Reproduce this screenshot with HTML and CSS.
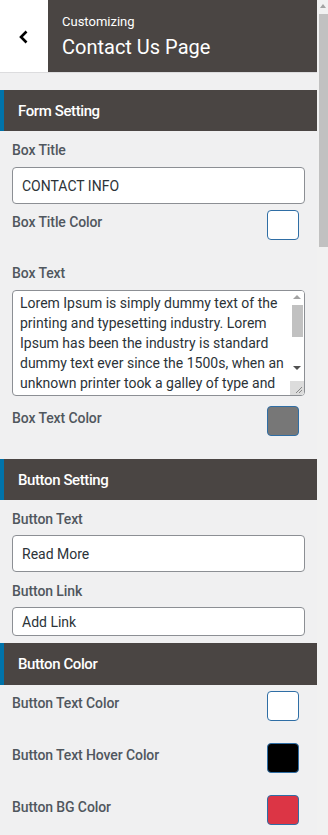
FILE: index.html
```html
<!DOCTYPE html>
<html lang="en">
<head>
  <meta charset="UTF-8" />
  <meta name="viewport" content="width=device-width, initial-scale=1.0" />
  <title>Customizing Contact Us Page</title>
  <link rel="stylesheet" href="styles.css">
</head>
<body>
  <div class="panel">
    <div class="top-bar">
      <button class="back" aria-label="Back">
        <svg width="12" height="16" viewBox="0 0 12 16"><path d="M8.5 2.5 L3 8 L8.5 13.5" fill="none" stroke="#000" stroke-width="2.6"/></svg>
      </button>
      <div class="title">
        <span class="sub">Customizing</span>
        <span class="main">Contact Us Page</span>
      </div>
    </div>

    <div class="section-head">Form Setting</div>
    <div class="section-body form">
      <label class="label">Box Title</label>
      <div class="input">CONTACT INFO</div>
      <div class="color-row">
        <label class="label">Box Title Color</label>
        <span class="swatch" style="background:#ffffff"></span>
      </div>
      <label class="label spaced">Box Text</label>
      <div class="textarea">
        <div class="textarea-text">Lorem Ipsum is simply dummy text of the printing and typesetting industry. Lorem Ipsum has been the industry is standard dummy text ever since the 1500s, when an unknown printer took a galley of type and</div>
        <div class="mini-scroll">
          <span class="arrow up"></span>
          <span class="mini-thumb"></span>
          <span class="arrow down"></span>
          <span class="grip">
            <svg width="9" height="9" viewBox="0 0 9 9"><path d="M8 2 L2 8 M8 5 L5 8" stroke="#888" stroke-width="1"/></svg>
          </span>
        </div>
      </div>
      <div class="color-row">
        <label class="label">Box Text Color</label>
        <span class="swatch" style="background:#777777"></span>
      </div>
    </div>

    <div class="section-head">Button Setting</div>
    <div class="section-body">
      <label class="label">Button Text</label>
      <div class="input">Read More</div>
      <label class="label">Button Link</label>
      <div class="input small">Add Link</div>
    </div>

    <div class="section-head tight">Button Color</div>
    <div class="section-body">
      <div class="color-row first">
        <label class="label">Button Text Color</label>
        <span class="swatch" style="background:#ffffff"></span>
      </div>
      <div class="color-row wide">
        <label class="label">Button Text Hover Color</label>
        <span class="swatch" style="background:#000000"></span>
      </div>
      <div class="color-row wide">
        <label class="label">Button BG Color</label>
        <span class="swatch" style="background:#dc3545"></span>
      </div>
    </div>
  </div>

  <div class="page-scroll">
    <span class="page-arrow"></span>
    <span class="page-thumb"></span>
  </div>
</body>
</html>
```

FILE: styles.css
```css
* {
  box-sizing: border-box;
}

body {
  margin: 0;
  font-family: Roboto, "Liberation Sans", sans-serif;
  background: #f0f0f1;
  color: #50575e;
  display: flex;
  height: 100vh;
  overflow: hidden;
}

.panel {
  width: 317px;
  flex-shrink: 0;
}

.top-bar {
  display: flex;
  height: 73px;
  border-bottom: 1px solid #dcdcde;
}

.back {
  width: 48px;
  border: none;
  background: #fff;
  padding: 0;
  display: flex;
  align-items: center;
  justify-content: center;
  padding-top: 2px;
}

.title {
  flex: 1;
  background: #4a4543;
  color: #fff;
  display: flex;
  flex-direction: column;
  padding: 13px 14px 0;
}

.title .sub {
  font-size: 13px;
  line-height: 17px;
}

.title .main {
  font-size: 20px;
  line-height: 24px;
  margin-top: 5px;
}

.section-head {
  margin-top: 17px;
  height: 41px;
  background: #4a4543;
  border-left: 4px solid #0073aa;
  color: #fff;
  font-size: 15px;
  font-weight: 500;
  letter-spacing: -0.4px;
  display: flex;
  align-items: center;
  padding-left: 14px;
}

.section-body + .section-head {
  margin-top: 23px;
}

.section-body + .section-head.tight {
  margin-top: 7px;
  height: 42px;
}

.section-body {
  padding: 9px 12px 0;
  display: flex;
  flex-direction: column;
}

.label {
  font-size: 14px;
  font-weight: 500;
  line-height: 20px;
  color: #50575e;
  letter-spacing: -0.1px;
}

.label.spaced {
  margin-top: 23px;
}

.label + .input {
  margin-top: 6px;
}

.form .label + .input,
.label + .textarea {
  margin-top: 7px;
}

.input + .label {
  margin-top: 9px;
}

.input {
  height: 37px;
  background: #fff;
  border: 1px solid #8c8f94;
  border-radius: 4px;
  font-size: 14px;
  color: #2c3338;
  display: flex;
  align-items: center;
  padding-left: 9px;
}

.input.small {
  height: 29px;
}

.color-row {
  display: flex;
  justify-content: space-between;
  align-items: flex-start;
  margin-top: 6px;
  padding-right: 6px;
}

.color-row .label {
  padding-top: 2px;
}

.textarea + .color-row {
  margin-top: 10px;
}

.color-row.first {
  margin-top: -3px;
}

.color-row.wide {
  margin-top: 22px;
}

.swatch {
  width: 32px;
  height: 30px;
  border: 1px solid #2f6ea5;
  border-radius: 4px;
}

.textarea {
  height: 106px;
  background: #fff;
  border: 1px solid #8c8f94;
  border-radius: 4px;
  display: flex;
  overflow: hidden;
}

.textarea-text {
  flex: 1;
  font-size: 14px;
  line-height: 20px;
  color: #2c3338;
  padding: 2px 0 0 7px;
  overflow: hidden;
}

.mini-scroll {
  width: 14px;
  display: flex;
  flex-direction: column;
  align-items: center;
  background: #fff;
}

.arrow {
  width: 0;
  height: 0;
  border-left: 4px solid transparent;
  border-right: 4px solid transparent;
}

.arrow.up {
  margin-top: 4px;
  border-bottom: 4px solid #a3a3a3;
}

.arrow.down {
  margin-top: 29px;
  border-top: 4px solid #505050;
}

.mini-thumb {
  margin-top: 6px;
  width: 11px;
  height: 32px;
  background: #c1c1c1;
}

.grip {
  margin-top: auto;
  width: 14px;
  height: 14px;
  background: #dcdcdc;
  display: flex;
  align-items: flex-end;
  justify-content: flex-end;
  padding: 0 1px 1px 0;
}

.page-scroll {
  width: 11px;
  background: #f1f1f1;
  display: flex;
  flex-direction: column;
  align-items: flex-end;
}

.page-arrow {
  margin: 4px 2px 0 0;
  width: 0;
  height: 0;
  border-left: 3px solid transparent;
  border-right: 3px solid transparent;
  border-bottom: 4px solid #a3a3a3;
}

.page-thumb {
  margin-top: 6px;
  width: 9px;
  height: 233px;
  background: #c1c1c1;
}
```
